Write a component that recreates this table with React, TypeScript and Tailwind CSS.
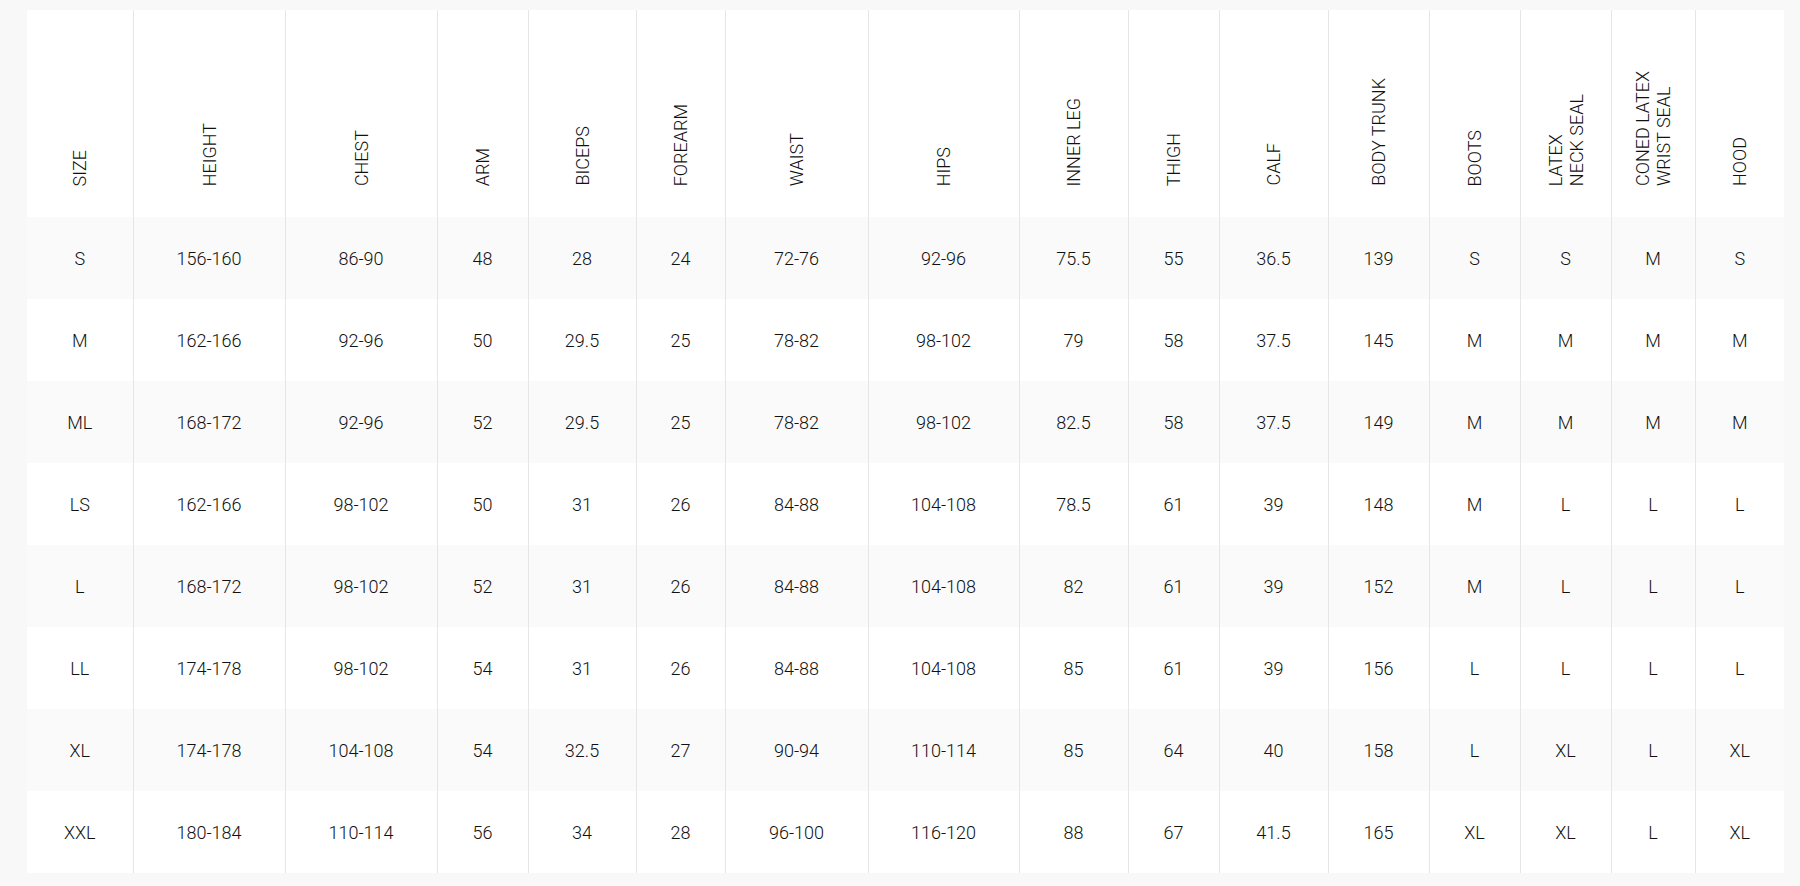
const COLUMNS: { label: string[]; width: number }[] = [
  { label: ["SIZE"], width: 106 },
  { label: ["HEIGHT"], width: 152 },
  { label: ["CHEST"], width: 152 },
  { label: ["ARM"], width: 91 },
  { label: ["BICEPS"], width: 108 },
  { label: ["FOREARM"], width: 89 },
  { label: ["WAIST"], width: 143 },
  { label: ["HIPS"], width: 151 },
  { label: ["INNER LEG"], width: 109 },
  { label: ["THIGH"], width: 91 },
  { label: ["CALF"], width: 109 },
  { label: ["BODY TRUNK"], width: 101 },
  { label: ["BOOTS"], width: 91 },
  { label: ["LATEX", "NECK SEAL"], width: 91 },
  { label: ["CONED LATEX", "WRIST SEAL"], width: 84 },
  { label: ["HOOD"], width: 89 },
];

const ROWS: string[][] = [
  ["S", "156-160", "86-90", "48", "28", "24", "72-76", "92-96", "75.5", "55", "36.5", "139", "S", "S", "M", "S"],
  ["M", "162-166", "92-96", "50", "29.5", "25", "78-82", "98-102", "79", "58", "37.5", "145", "M", "M", "M", "M"],
  ["ML", "168-172", "92-96", "52", "29.5", "25", "78-82", "98-102", "82.5", "58", "37.5", "149", "M", "M", "M", "M"],
  ["LS", "162-166", "98-102", "50", "31", "26", "84-88", "104-108", "78.5", "61", "39", "148", "M", "L", "L", "L"],
  ["L", "168-172", "98-102", "52", "31", "26", "84-88", "104-108", "82", "61", "39", "152", "M", "L", "L", "L"],
  ["LL", "174-178", "98-102", "54", "31", "26", "84-88", "104-108", "85", "61", "39", "156", "L", "L", "L", "L"],
  ["XL", "174-178", "104-108", "54", "32.5", "27", "90-94", "110-114", "85", "64", "40", "158", "L", "XL", "L", "XL"],
  ["XXL", "180-184", "110-114", "56", "34", "28", "96-100", "116-120", "88", "67", "41.5", "165", "XL", "XL", "L", "XL"],
];

export default function App() {
  return (
    <main className="min-h-screen bg-[#f8f8f8] pl-[27px] pt-[10px] font-['Roboto','Liberation_Sans',sans-serif] text-[18px] font-light text-[#111]">
      <table className="w-[1757px] table-fixed border-collapse">
        <colgroup>
          {COLUMNS.map((col) => (
            <col key={col.label.join(" ")} style={{ width: col.width }} />
          ))}
        </colgroup>
        <thead>
          <tr className="h-[207px] bg-white">
            {COLUMNS.map((col, i) => (
              <th
                key={col.label.join(" ")}
                className={`p-0 pb-[31px] align-bottom font-light ${i > 0 ? "border-l border-[#e6e6e6]" : ""}`}>
                <div className="flex justify-center">
                  <span className="rotate-180 text-left leading-[21px] whitespace-nowrap [writing-mode:vertical-rl]">
                    {col.label.map((line) => (
                      <span key={line} className="block">
                        {line}
                      </span>
                    ))}
                  </span>
                </div>
              </th>
            ))}
          </tr>
        </thead>
        <tbody>
          {ROWS.map((row, r) => (
            <tr key={row[0]} className={`h-[82px] ${r % 2 === 0 ? "bg-[#fafafa]" : "bg-white"}`}>
              {row.map((cell, i) => (
                <td
                  key={COLUMNS[i].label.join(" ")}
                  className={`p-0 text-center align-middle ${i > 0 ? "border-l border-[#e6e6e6]" : ""}`}>
                  {cell}
                </td>
              ))}
            </tr>
          ))}
        </tbody>
      </table>
    </main>
  );
}
